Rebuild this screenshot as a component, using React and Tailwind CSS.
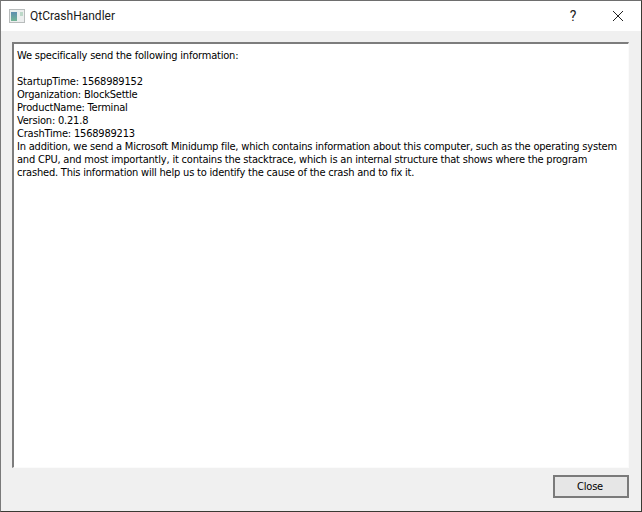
const lines = [
  "StartupTime: 1568989152",
  "Organization: BlockSettle",
  "ProductName: Terminal",
  "Version: 0.21.8",
  "CrashTime: 1568989213",
  "In addition, we send a Microsoft Minidump file, which contains information about this computer, such as the operating system",
  "and CPU, and most importantly, it contains the stacktrace, which is an internal structure that shows where the program",
  "crashed. This information will help us to identify the cause of the crash and to fix it.",
]

const App = () => {
  return (
    <div className="w-[642px] h-[512px] flex flex-col overflow-hidden bg-[#f0f0f0] border border-t-[#6e6e6e] border-l-[#7a7a7a] border-r-[#3a3a34] border-b-[#3a3a34] font-['DejaVu_Sans_Condensed','DejaVu_Sans',sans-serif] text-[11px] tracking-[-0.2px] text-[#000]">
      <div className="h-[30px] shrink-0 bg-white flex items-center pl-[8px]">
        <svg width="16" height="16" viewBox="0 0 16 16" className="shrink-0">
          <defs>
            <linearGradient id="pane" x1="0" y1="0" x2="0" y2="1">
              <stop offset="0" stopColor="#5f8db0" />
              <stop offset="1" stopColor="#74b595" />
            </linearGradient>
          </defs>
          <rect x="0.5" y="1.5" width="15" height="13" fill="#eceeee" stroke="#b8bcbc" />
          <rect x="2" y="4" width="6" height="9" fill="url(#pane)" />
          <rect x="11" y="4" width="3" height="4" fill="#bcd8c8" />
        </svg>
        <span className="ml-[5px] font-['Roboto',sans-serif] text-[12px] tracking-normal text-[#1a1a1a]">QtCrashHandler</span>
        <div className="ml-auto flex items-center">
          <span className="w-[46px] pl-[2px] text-center font-['Roboto',sans-serif] text-[14px] text-[#222]">?</span>
          <svg width="46" height="12" viewBox="0 0 46 12">
            <path d="M18 1 L28 11 M28 1 L18 11" stroke="#222" fill="none" />
          </svg>
        </div>
      </div>
      <div className="flex-1 min-h-0 flex flex-col pt-[11px] pl-[11px] pr-[12px] pb-[13px]">
        <div className="flex-1 min-h-0 bg-white border-2 border-r-[1px] border-b-[1px] border-t-[#7d7d7d] border-l-[#7d7d7d] border-r-[#fbfbfb] border-b-[#fbfbfb] pl-[3px] pt-[5px] leading-[13px] whitespace-nowrap">
          <div>We specifically send the following information:</div>
          <div className="h-[13px]"></div>
          {lines.map((line) => (
            <div key={line}>{line}</div>
          ))}
        </div>
        <div className="flex justify-end mt-[7px]">
          <button className="w-[76px] h-[23px] pt-[2px] pr-[2px] bg-[#e6e6e6] border-2 border-[#7a7a7a] text-[11px] text-[#000]">Close</button>
        </div>
      </div>
    </div>
  )
}

export default App
